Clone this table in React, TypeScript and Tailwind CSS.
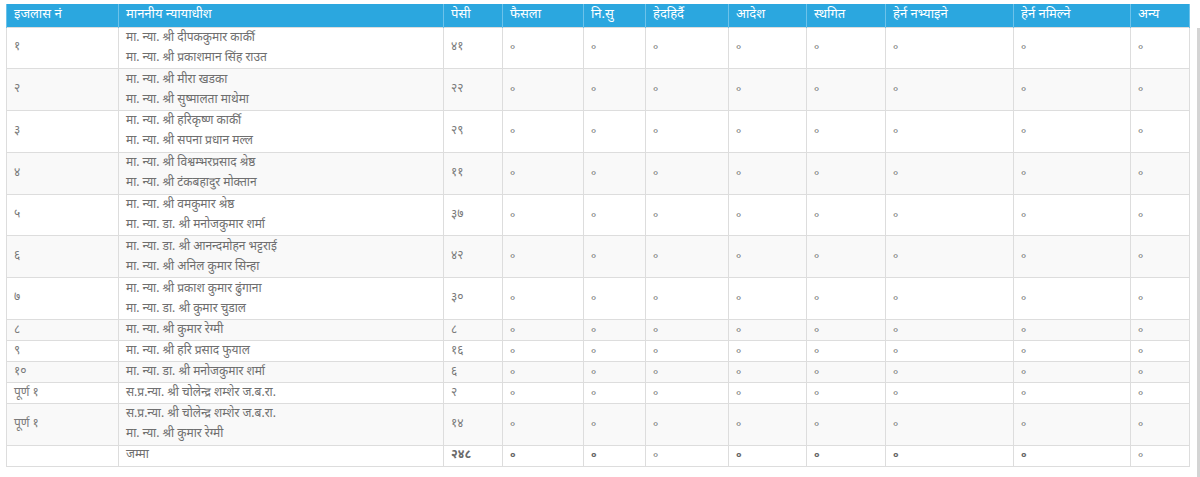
import React from "react";

const headers = [
    "इजलास नं",
    "माननीय न्यायाधीश",
    "पेसी",
    "फैसला",
    "नि.सु",
    "हेदहिर्दै",
    "आदेश",
    "स्थगित",
    "हेर्न नभ्याइने",
    "हेर्न नमिल्ने",
    "अन्य",
];

const widths = ["w-[112px]", "w-[325px]", "w-[59px]", "w-[81px]", "w-[62px]", "w-[83px]", "w-[78px]", "w-[79px]", "w-[128px]", "w-[117px]", "w-[59px]"];

const rows: { bench: string; judges: string[]; pesi: string }[] = [
    { bench: "१", judges: ["मा. न्या. श्री दीपककुमार कार्की", "मा. न्या. श्री प्रकाशमान सिंह राउत"], pesi: "४१" },
    { bench: "२", judges: ["मा. न्या. श्री मीरा खडका", "मा. न्या. श्री सुष्मालता माथेमा"], pesi: "२२" },
    { bench: "३", judges: ["मा. न्या. श्री हरिकृष्ण कार्की", "मा. न्या. श्री सपना प्रधान मल्ल"], pesi: "२९" },
    { bench: "४", judges: ["मा. न्या. श्री विश्वम्भरप्रसाद श्रेष्ठ", "मा. न्या. श्री टंकबहादुर मोक्तान"], pesi: "११" },
    { bench: "५", judges: ["मा. न्या. श्री वमकुमार श्रेष्ठ", "मा. न्या. डा. श्री मनोजकुमार शर्मा"], pesi: "३७" },
    { bench: "६", judges: ["मा. न्या. डा. श्री आनन्दमोहन भट्टराई", "मा. न्या. श्री अनिल कुमार सिन्हा"], pesi: "४२" },
    { bench: "७", judges: ["मा. न्या. श्री प्रकाश कुमार ढुंगाना", "मा. न्या. डा. श्री कुमार चुडाल"], pesi: "३०" },
    { bench: "८", judges: ["मा. न्या. श्री कुमार रेग्मी"], pesi: "८" },
    { bench: "९", judges: ["मा. न्या. श्री हरि प्रसाद फुयाल"], pesi: "१६" },
    { bench: "१०", judges: ["मा. न्या. डा. श्री मनोजकुमार शर्मा"], pesi: "६" },
    { bench: "पूर्ण १", judges: ["स.प्र.न्या. श्री चोलेन्द्र शम्शेर ज.ब.रा."], pesi: "२" },
    { bench: "पूर्ण १", judges: ["स.प्र.न्या. श्री चोलेन्द्र शम्शेर ज.ब.रा.", "मा. न्या. श्री कुमार रेग्मी"], pesi: "१४" },
];

// which zero columns are bold in the total row
const totalBold = [true, true, false, true, true, true, true, false];

const cell = "border border-[#dddddd] px-[7px] py-0 align-middle leading-[19px]";

export default function App() {
    return (
        <div className="flex w-[1200px] h-[477px] bg-white overflow-hidden font-['Noto_Sans_Devanagari','Noto_Sans','Liberation_Sans',sans-serif] text-[12px] text-[#7a7a7a]">
            <div className="flex-1 pl-[6px] pt-[4px]">
                <table className="table-fixed border-collapse w-[1183px]">
                    <colgroup>
                        {widths.map((w, i) => (
                            <col key={i} className={w} />
                        ))}
                    </colgroup>
                    <thead>
                        <tr className="h-[23px] bg-[#2ba7df]">
                            {headers.map((h) => (
                                <th key={h} className="border-x border-[#6cc2ea] px-[7px] py-0 text-left font-normal text-[13px] text-white leading-[20px]">
                                    {h}
                                </th>
                            ))}
                        </tr>
                    </thead>
                    <tbody>
                        {rows.map((r, i) => (
                            <tr key={i} className={`${r.judges.length > 1 ? "h-[41.8px]" : "h-[21px]"} ${i % 2 === 1 ? "bg-[#f9f9f9]" : "bg-white"}`}>
                                <td className={cell}>{r.bench}</td>
                                <td className={cell}>
                                    {r.judges.map((j, k) => (
                                        <div key={k} className="leading-[20px] text-[#6f6f6f]">
                                            {j}
                                        </div>
                                    ))}
                                </td>
                                <td className={cell}>{r.pesi}</td>
                                {Array.from({ length: 8 }).map((_, k) => (
                                    <td key={k} className={`${cell} text-[10px]`}>
                                        ०
                                    </td>
                                ))}
                            </tr>
                        ))}
                        <tr className="h-[21px] bg-white">
                            <td className={cell}></td>
                            <td className={`${cell} text-[#6f6f6f]`}>जम्मा</td>
                            <td className={`${cell} font-bold text-[#6a6a6a]`}>२४८</td>
                            {totalBold.map((b, k) => (
                                <td key={k} className={`${cell} text-[10px] ${b ? "font-bold text-[#666]" : ""}`}>
                                    ०
                                </td>
                            ))}
                        </tr>
                    </tbody>
                </table>
            </div>
            {/* page scrollbar */}
            <div className="w-[3px] mt-[28px] bg-[#d4d4d4]" />
        </div>
    );
}
